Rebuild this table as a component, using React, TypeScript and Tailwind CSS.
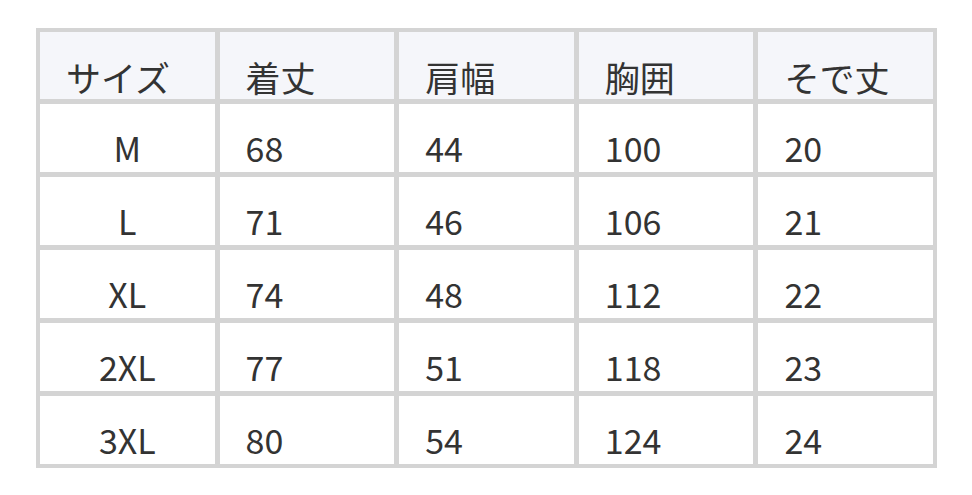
const HEAD = ['サイズ', '着丈', '肩幅', '胸囲', 'そで丈'];

const ROWS: string[][] = [
  ['M', '68', '44', '100', '20'],
  ['L', '71', '46', '106', '21'],
  ['XL', '74', '48', '112', '22'],
  ['2XL', '77', '51', '118', '23'],
  ['3XL', '80', '54', '124', '24'],
];

const font = { fontFamily: '"Noto Sans CJK JP", "Noto Sans", sans-serif' };

export default function App() {
  return (
    <div className="h-[495px] w-[972px] bg-white pl-[36px] pt-[28px]" style={font}>
      <div className="grid w-[901px] grid-cols-5 gap-[5px] bg-[#d4d4d4] p-[4px] text-[#333]">
        {HEAD.map((h) => (
          <div key={h} className="flex h-[67px] items-end bg-[#f5f6fa] pb-[5px] pl-[26px] text-[35px] leading-none">
            {h}
          </div>
        ))}
        {ROWS.map((row) =>
          row.map((cell, i) => (
            <div
              key={row[0] + i}
              className={
                'flex h-[68px] items-end bg-white pb-[7px] text-[34px] leading-none ' +
                (i === 0 ? 'justify-center' : 'pl-[26px]')
              }
            >
              {cell}
            </div>
          )),
        )}
      </div>
    </div>
  );
}
